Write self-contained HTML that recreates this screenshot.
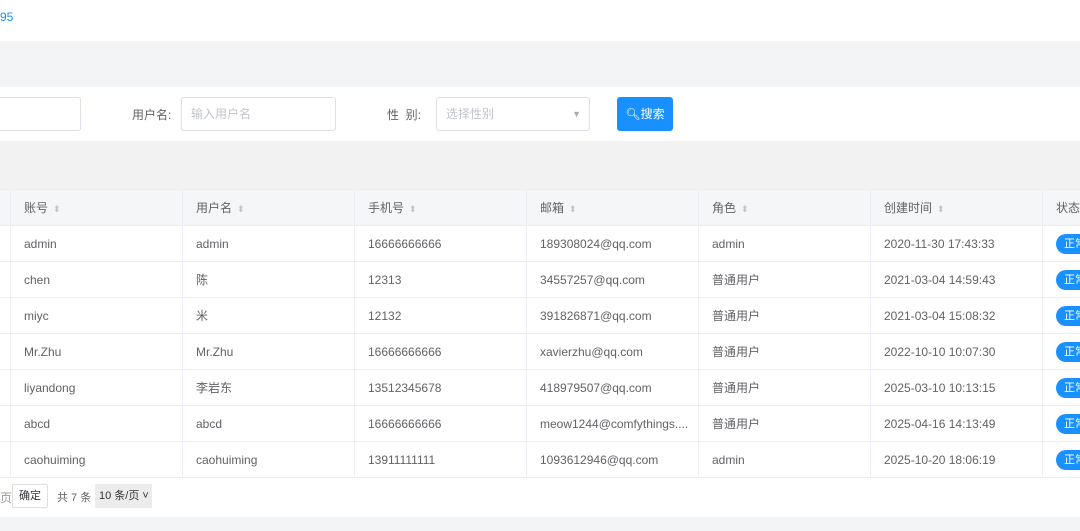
<!DOCTYPE html>
<html><head><meta charset="utf-8"><style>
*{margin:0;padding:0;box-sizing:border-box}
body{width:1080px;height:531px;overflow:hidden;background:#fff;font-family:"Liberation Sans","Noto Sans CJK SC",sans-serif;font-size:12px;color:#606266;position:relative}
.a{position:absolute}
.inp{position:absolute;top:97px;height:34px;border:1px solid #dcdfe6;border-radius:3px;background:#fff;color:#c0c4cc;padding-left:9px;line-height:32px}
table{position:absolute;left:-162px;top:189px;width:1376px;border-collapse:collapse;table-layout:fixed}
td{height:36px;border:1px solid #ebeef5;padding-left:13px;white-space:nowrap;overflow:hidden}
tr.h td{background:#f5f6f8;color:#606266}
.s{color:#c0c4cc;font-size:9px;margin-left:5px}
.tag{display:inline-block;background:#1890ff;color:#fff;border-radius:10px;padding:0 8px;height:20px;line-height:20px;font-size:11px}
</style></head><body>
<div class="a" style="left:0;top:10px;color:#1890ff;font-size:12px">95</div>
<div class="a" style="left:0;top:41px;width:1080px;height:46px;background:#f3f4f6"></div>
<div class="inp" style="left:-10px;width:91px"></div>
<div class="a" style="left:132px;top:106px;color:#606266">用户名:</div>
<div class="inp" style="left:181px;width:155px">输入用户名</div>
<div class="a" style="left:387px;top:106px;color:#606266">性&nbsp;&nbsp;别:</div>
<div class="inp" style="left:436px;width:154px">选择性别<span style="position:absolute;right:8px;top:0;color:#aaa;font-size:9px">▼</span></div>
<div class="a" style="left:617px;top:97px;width:56px;height:34px;background:#1890ff;border-radius:3px;color:#fff;line-height:34px;text-align:center;font-size:12px">&#x1F50D;&#xFE0E;搜索</div>
<div class="a" style="left:0;top:141px;width:1080px;height:48px;background:#f2f2f2"></div>
<table>
<colgroup><col style="width:172px"><col style="width:172px"><col style="width:172px"><col style="width:172px"><col style="width:172px"><col style="width:172px"><col style="width:172px"><col style="width:172px"></colgroup>
<tr class="h"><td></td><td>账号<span class="s">⬍</span></td><td>用户名<span class="s">⬍</span></td><td>手机号<span class="s">⬍</span></td><td>邮箱<span class="s">⬍</span></td><td>角色<span class="s">⬍</span></td><td>创建时间<span class="s">⬍</span></td><td>状态</td></tr>
<tr><td></td><td>admin</td><td>admin</td><td>16666666666</td><td>189308024@qq.com</td><td>admin</td><td>2020-11-30 17:43:33</td><td><span class="tag">正常</span></td></tr>
<tr><td></td><td>chen</td><td>陈</td><td>12313</td><td>34557257@qq.com</td><td>普通用户</td><td>2021-03-04 14:59:43</td><td><span class="tag">正常</span></td></tr>
<tr><td></td><td>miyc</td><td>米</td><td>12132</td><td>391826871@qq.com</td><td>普通用户</td><td>2021-03-04 15:08:32</td><td><span class="tag">正常</span></td></tr>
<tr><td></td><td>Mr.Zhu</td><td>Mr.Zhu</td><td>16666666666</td><td>xavierzhu@qq.com</td><td>普通用户</td><td>2022-10-10 10:07:30</td><td><span class="tag">正常</span></td></tr>
<tr><td></td><td>liyandong</td><td>李岩东</td><td>13512345678</td><td>418979507@qq.com</td><td>普通用户</td><td>2025-03-10 10:13:15</td><td><span class="tag">正常</span></td></tr>
<tr><td></td><td>abcd</td><td>abcd</td><td>16666666666</td><td>meow1244@comfythings....</td><td>普通用户</td><td>2025-04-16 14:13:49</td><td><span class="tag">正常</span></td></tr>
<tr><td></td><td>caohuiming</td><td>caohuiming</td><td>13911111111</td><td>1093612946@qq.com</td><td>admin</td><td>2025-10-20 18:06:19</td><td><span class="tag">正常</span></td></tr>
</table>
<div class="a" style="left:0;top:489px;color:#999">页</div>
<div class="a" style="left:12px;top:484px;width:36px;height:24px;border:1px solid #dcdfe6;border-radius:2px;text-align:center;line-height:22px;font-size:11px;color:#333">确定</div>
<div class="a" style="left:57px;top:489px;font-size:11px">共 7 条</div>
<div class="a" style="left:95px;top:484px;width:57px;height:24px;background:#ececec;line-height:24px;padding-left:4px;font-size:11px;color:#333">10 条/页 ˅</div>
<div class="a" style="left:0;top:517px;width:1080px;height:14px;background:#f3f4f6"></div>
</body></html>
